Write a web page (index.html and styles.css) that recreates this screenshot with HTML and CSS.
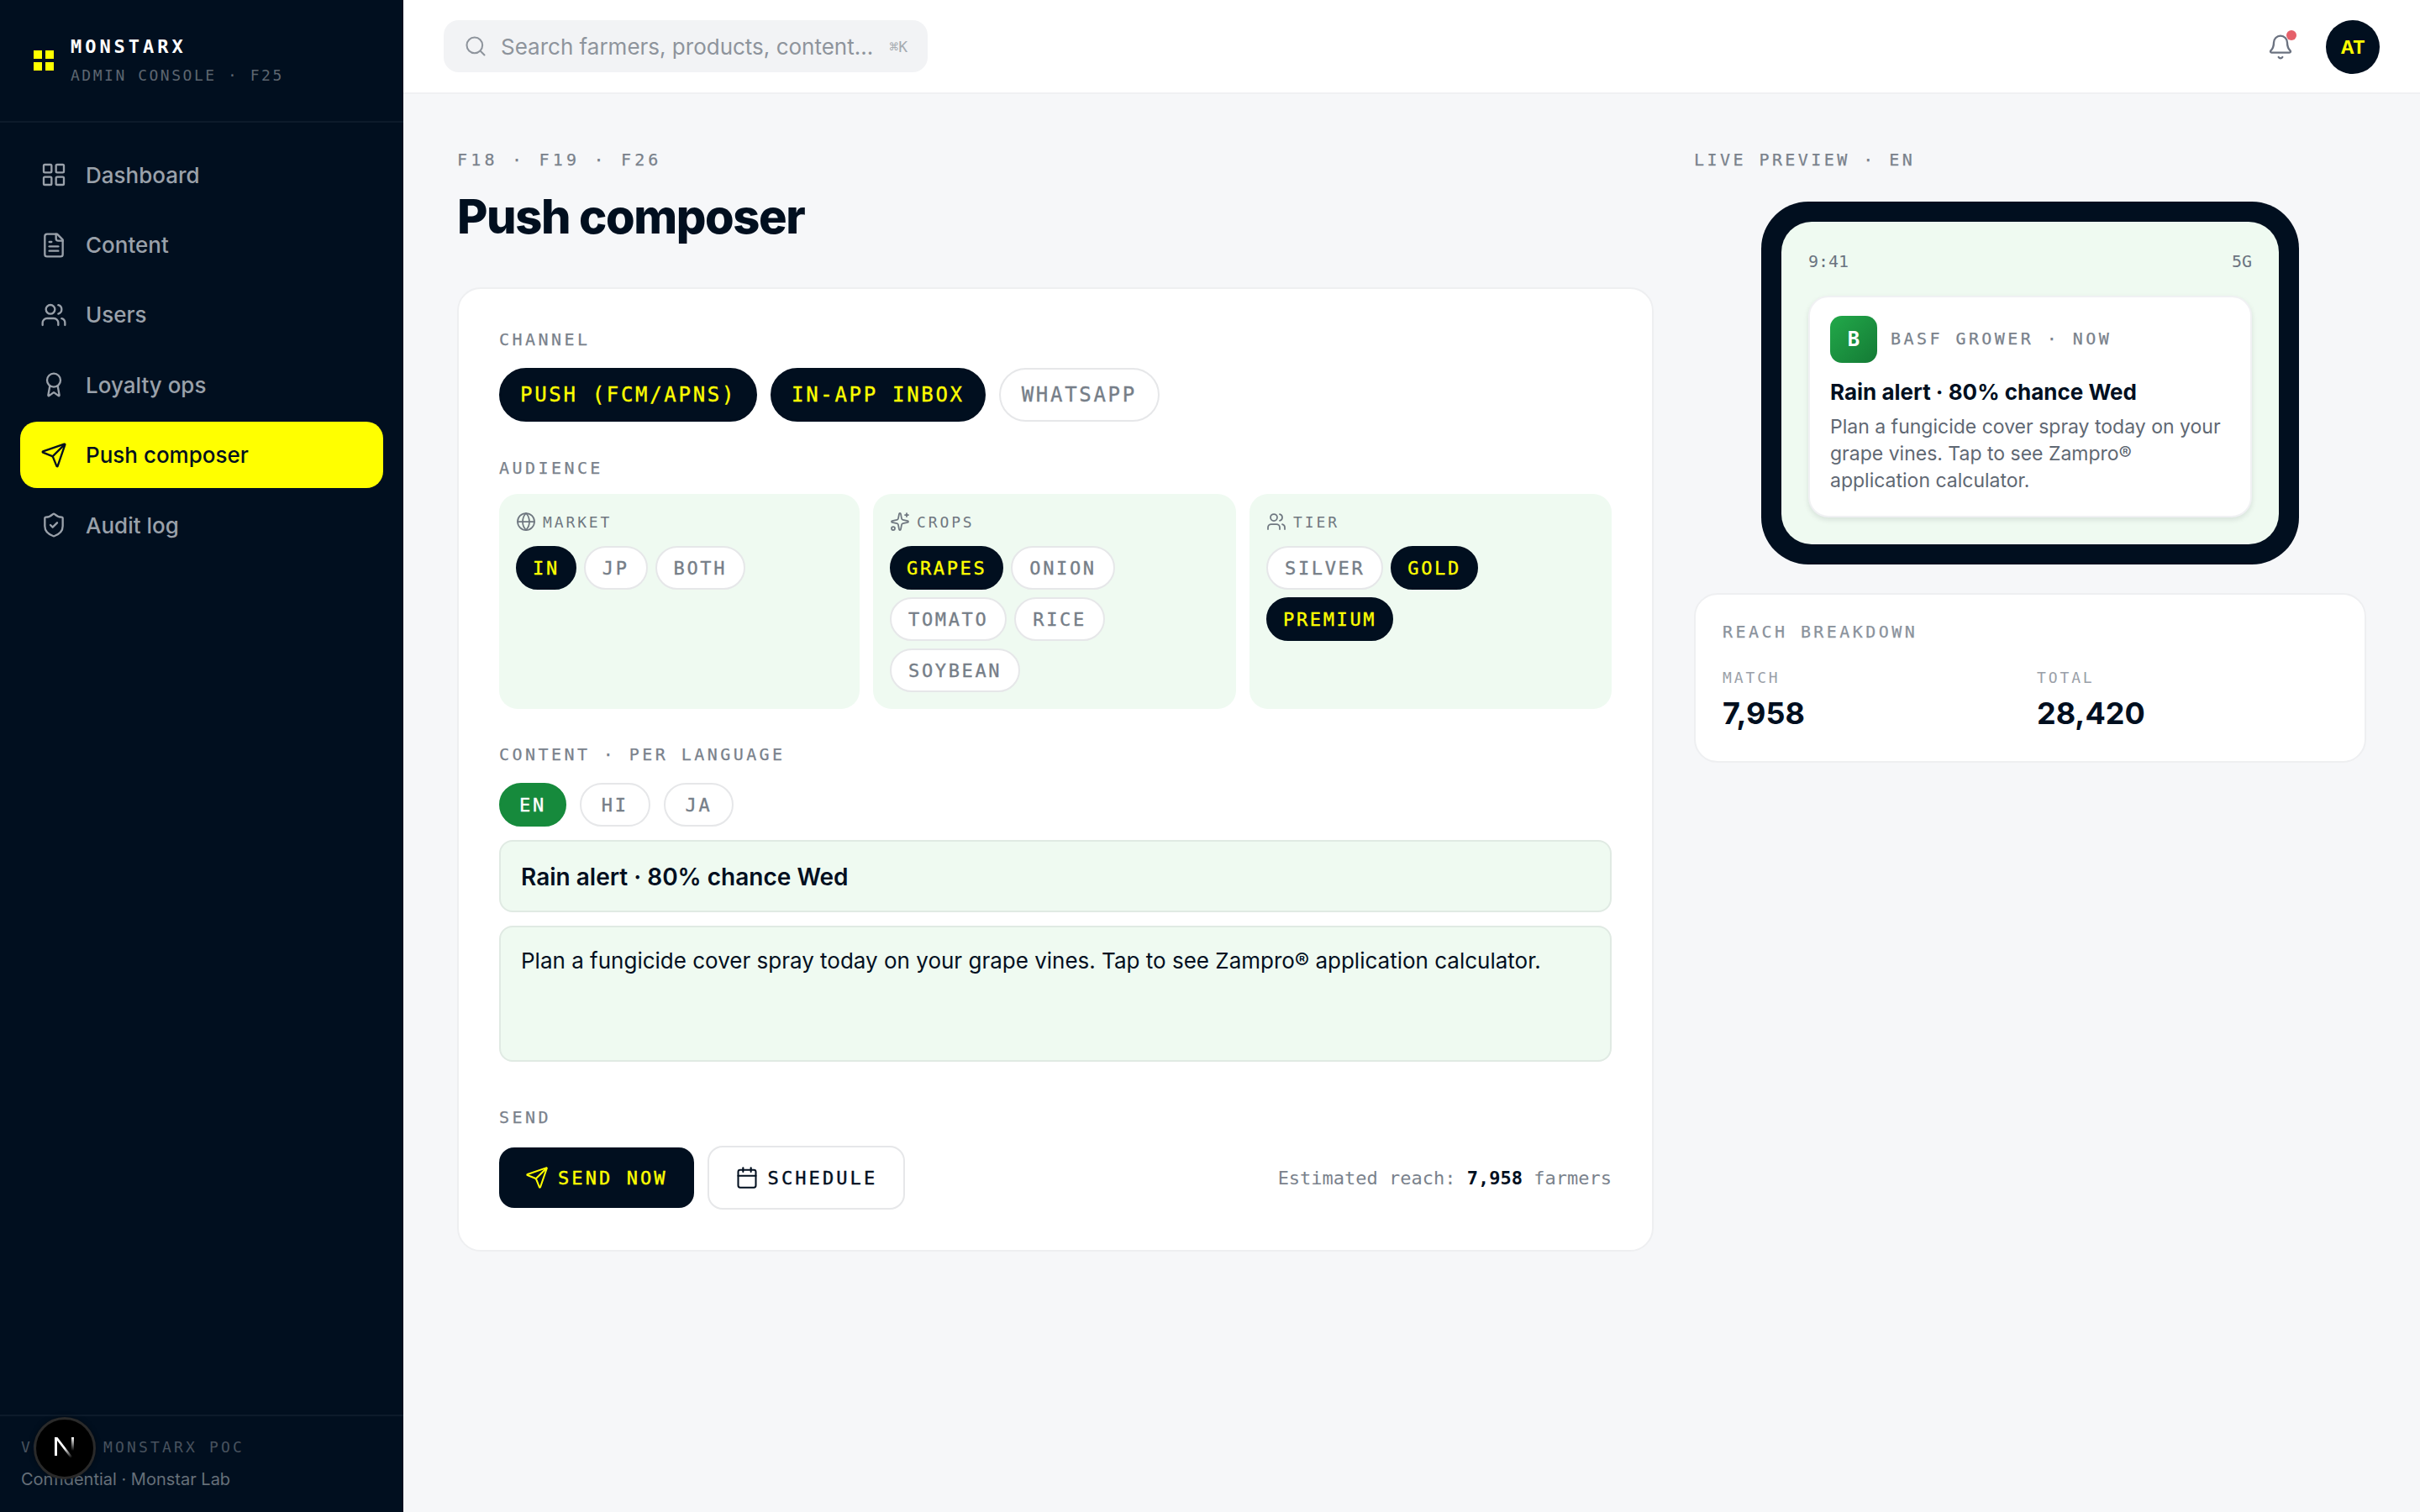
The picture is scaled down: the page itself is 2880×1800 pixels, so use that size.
FILE: index.html
```html
<!DOCTYPE html>
<html lang="en">
<head>
  <meta charset="UTF-8">
  <title>Push composer</title>
  <link rel="stylesheet" href="styles.css">
</head>
<body>
  <div class="app">
    <aside class="sidebar">
      <div class="brand">
        <div class="brand-logo"><i></i><i></i><i></i><i></i></div>
        <div class="brand-text">
          <div class="brand-name">MONSTARX</div>
          <div class="brand-sub">ADMIN CONSOLE · F25</div>
        </div>
      </div>

      <nav class="nav">
        <a class="nav-item">
          <svg class="icon nav-icon" viewBox="0 0 24 24"><rect x="3" y="3" width="7" height="7" rx="1"/><rect x="14" y="3" width="7" height="7" rx="1"/><rect x="14" y="14" width="7" height="7" rx="1"/><rect x="3" y="14" width="7" height="7" rx="1"/></svg>
          Dashboard
        </a>
        <a class="nav-item">
          <svg class="icon nav-icon" viewBox="0 0 24 24"><path d="M15 2H6a2 2 0 0 0-2 2v16a2 2 0 0 0 2 2h12a2 2 0 0 0 2-2V7Z"/><path d="M14 2v4a2 2 0 0 0 2 2h4"/><path d="M10 9H8"/><path d="M16 13H8"/><path d="M16 17H8"/></svg>
          Content
        </a>
        <a class="nav-item">
          <svg class="icon nav-icon" viewBox="0 0 24 24"><path d="M16 21v-2a4 4 0 0 0-4-4H6a4 4 0 0 0-4 4v2"/><circle cx="9" cy="7" r="4"/><path d="M22 21v-2a4 4 0 0 0-3-3.87"/><path d="M16 3.13a4 4 0 0 1 0 7.75"/></svg>
          Users
        </a>
        <a class="nav-item">
          <svg class="icon nav-icon" viewBox="0 0 24 24"><path d="m15.477 12.89 1.515 8.526a.5.5 0 0 1-.81.47l-3.58-2.687a1 1 0 0 0-1.197 0l-3.586 2.686a.5.5 0 0 1-.81-.469l1.514-8.526"/><circle cx="12" cy="8" r="6"/></svg>
          Loyalty ops
        </a>
        <a class="nav-item active">
          <svg class="icon nav-icon" viewBox="0 0 24 24"><path d="M14.536 21.686a.5.5 0 0 0 .937-.024l6.5-19a.496.496 0 0 0-.635-.635l-19 6.5a.5.5 0 0 0-.024.937l7.93 3.18a2 2 0 0 1 1.112 1.11z"/><path d="m21.854 2.147-10.94 10.939"/></svg>
          Push composer
        </a>
        <a class="nav-item">
          <svg class="icon nav-icon" viewBox="0 0 24 24"><path d="M20 13c0 5-3.5 7.5-7.66 8.95a1 1 0 0 1-.67-.01C7.5 20.5 4 18 4 13V6a1 1 0 0 1 1-1c2 0 4.5-1.2 6.24-2.72a1.17 1.17 0 0 1 1.52 0C14.51 3.81 17 5 19 5a1 1 0 0 1 1 1z"/><path d="m9 12 2 2 4-4"/></svg>
          Audit log
        </a>
      </nav>

      <div class="side-foot">
        <div class="side-version">V0.1 · MONSTARX POC</div>
        <div class="side-conf">Confidential · Monstar Lab</div>
      </div>
    </aside>

    <div class="page">
      <header class="topbar">
        <div class="search">
          <svg class="icon search-icon" viewBox="0 0 24 24"><circle cx="11" cy="11" r="8"/><path d="m21 21-4.3-4.3"/></svg>
          <span class="search-text">Search farmers, products, content...</span>
          <span class="search-key">⌘K</span>
        </div>
        <div class="top-right">
          <div class="bell">
            <svg class="icon" viewBox="0 0 24 24"><path d="M10.268 21a2 2 0 0 0 3.464 0"/><path d="M3.262 15.326A1 1 0 0 0 4 17h16a1 1 0 0 0 .74-1.673C19.41 13.956 18 12.499 18 8A6 6 0 0 0 6 8c0 4.499-1.411 5.956-2.738 7.326"/></svg>
            <span class="bell-dot"></span>
          </div>
          <div class="avatar">AT</div>
        </div>
      </header>

      <main class="content">
        <section>
          <div class="label eyebrow crumbs">F18 · F19 · F26</div>
          <h1>Push composer</h1>

          <div class="card composer">
            <div class="label">CHANNEL</div>
            <div class="channel-row">
              <span class="chip chip-lg on">PUSH (FCM/APNS)</span>
              <span class="chip chip-lg on">IN-APP INBOX</span>
              <span class="chip chip-lg">WHATSAPP</span>
            </div>

            <div class="label audience-label">AUDIENCE</div>
            <div class="zones">
              <div class="zone">
                <div class="zone-label">
                  <svg class="icon" viewBox="0 0 24 24"><circle cx="12" cy="12" r="10"/><path d="M12 2a14.5 14.5 0 0 0 0 20 14.5 14.5 0 0 0 0-20"/><path d="M2 12h20"/></svg>
                  MARKET
                </div>
                <div class="chips">
                  <span class="chip on">IN</span>
                  <span class="chip">JP</span>
                  <span class="chip">BOTH</span>
                </div>
              </div>
              <div class="zone">
                <div class="zone-label">
                  <svg class="icon" viewBox="0 0 24 24"><path d="M11.017 2.814a1 1 0 0 1 1.966 0l1.051 5.558a2 2 0 0 0 1.594 1.594l5.558 1.051a1 1 0 0 1 0 1.966l-5.558 1.051a2 2 0 0 0-1.594 1.594l-1.051 5.558a1 1 0 0 1-1.966 0l-1.051-5.558a2 2 0 0 0-1.594-1.594l-5.558-1.051a1 1 0 0 1 0-1.966l5.558-1.051a2 2 0 0 0 1.594-1.594z"/><path d="M20 2v4"/><path d="M22 4h-4"/><circle cx="4" cy="20" r="2"/></svg>
                  CROPS
                </div>
                <div class="chips">
                  <span class="chip on">GRAPES</span>
                  <span class="chip">ONION</span>
                  <span class="chip">TOMATO</span>
                  <span class="chip">RICE</span>
                  <span class="chip">SOYBEAN</span>
                </div>
              </div>
              <div class="zone">
                <div class="zone-label">
                  <svg class="icon" viewBox="0 0 24 24"><path d="M16 21v-2a4 4 0 0 0-4-4H6a4 4 0 0 0-4 4v2"/><circle cx="9" cy="7" r="4"/><path d="M22 21v-2a4 4 0 0 0-3-3.87"/><path d="M16 3.13a4 4 0 0 1 0 7.75"/></svg>
                  TIER
                </div>
                <div class="chips">
                  <span class="chip">SILVER</span>
                  <span class="chip on">GOLD</span>
                  <span class="chip on">PREMIUM</span>
                </div>
              </div>
            </div>

            <div class="label content-label">CONTENT · PER LANGUAGE</div>
            <div class="lang-row">
              <span class="chip lang on-green">EN</span>
              <span class="chip lang">HI</span>
              <span class="chip lang">JA</span>
            </div>
            <div class="field field-title">Rain alert · 80% chance Wed</div>
            <div class="field field-body">Plan a fungicide cover spray today on your grape vines. Tap to see Zampro® application calculator.</div>

            <div class="label send-label">SEND</div>
            <div class="send-row">
              <button class="btn btn-dark">
                <svg class="icon btn-icon" viewBox="0 0 24 24"><path d="M14.536 21.686a.5.5 0 0 0 .937-.024l6.5-19a.496.496 0 0 0-.635-.635l-19 6.5a.5.5 0 0 0-.024.937l7.93 3.18a2 2 0 0 1 1.112 1.11z"/><path d="m21.854 2.147-10.94 10.939"/></svg>
                SEND NOW
              </button>
              <button class="btn btn-light">
                <svg class="icon btn-icon" viewBox="0 0 24 24"><path d="M8 2v4"/><path d="M16 2v4"/><rect x="3" y="4" width="18" height="18" rx="2"/><path d="M3 10h18"/></svg>
                SCHEDULE
              </button>
              <div class="estimate">Estimated reach: <b>7,958</b> farmers</div>
            </div>
          </div>
        </section>

        <section>
          <div class="label eyebrow">LIVE PREVIEW · EN</div>
          <div class="phone">
            <div class="screen">
              <div class="status"><span>9:41</span><span>5G</span></div>
              <div class="notif">
                <div class="notif-head">
                  <div class="notif-logo">B</div>
                  <div class="label notif-app">BASF GROWER · NOW</div>
                </div>
                <div class="notif-title">Rain alert · 80% chance Wed</div>
                <div class="notif-body">Plan a fungicide cover spray today on your grape vines. Tap to see Zampro® application calculator.</div>
              </div>
            </div>
          </div>

          <div class="card reach">
            <div class="label reach-title">REACH BREAKDOWN</div>
            <div class="reach-grid">
              <div>
                <div class="reach-key">MATCH</div>
                <div class="reach-val">7,958</div>
              </div>
              <div>
                <div class="reach-key">TOTAL</div>
                <div class="reach-val">28,420</div>
              </div>
            </div>
          </div>
        </section>
      </main>
    </div>
  </div>

  <div class="dev-badge">
    <svg viewBox="0 0 24 27" width="24" height="27">
      <defs>
        <linearGradient id="nDiag" x1="0" y1="0" x2="0.7" y2="1">
          <stop offset="0.55" stop-color="#fff"/>
          <stop offset="1" stop-color="#fff" stop-opacity="0"/>
        </linearGradient>
        <linearGradient id="nStem" x1="0" y1="0" x2="0" y2="1">
          <stop offset="0" stop-color="#fff"/>
          <stop offset="0.8" stop-color="#fff" stop-opacity="0"/>
        </linearGradient>
      </defs>
      <rect x="0" y="0" width="3" height="22" fill="#fff"/>
      <polygon points="0,0 3.4,0 24,27 20.6,27" fill="url(#nDiag)"/>
      <rect x="20" y="0" width="3" height="20" fill="url(#nStem)"/>
    </svg>
  </div>
</body>
</html>
```

FILE: styles.css
```css
* {
  box-sizing: border-box;
}

body {
  margin: 0;
  font-family: 'Inter', 'Noto Sans', sans-serif;
  background: #f6f7f9;
  color: #010f1f;
}

.icon {
  width: 24px;
  height: 24px;
  flex: none;
  fill: none;
  stroke: currentColor;
  stroke-width: 1.75;
  stroke-linecap: round;
  stroke-linejoin: round;
}

.label {
  font-family: 'DejaVu Sans Mono', 'Liberation Mono', monospace;
  font-size: 20px;
  line-height: 24px;
  letter-spacing: 0.172em;
  color: #7a828c;
  -webkit-text-stroke: 0.25px currentColor;
}

.app {
  display: flex;
  height: 100vh;
}

/* sidebar */
.sidebar {
  width: 480px;
  flex: none;
  display: flex;
  flex-direction: column;
  background: #010f1f;
}

.brand {
  height: 146px;
  padding-left: 40px;
  display: flex;
  align-items: center;
  gap: 20px;
  border-bottom: 2px solid #0d1b2b;
}

.brand-logo {
  width: 24px;
  height: 24px;
  display: grid;
  grid-template-columns: 10px 10px;
  gap: 4px;
}

.brand-logo i {
  background: #ffff00;
}

.brand-text {
  padding-top: 4px;
}

.brand-name {
  font-family: 'DejaVu Sans Mono', monospace;
  font-size: 22px;
  font-weight: bold;
  line-height: 32px;
  letter-spacing: 0.18em;
  color: #fff;
}

.brand-sub {
  font-family: 'DejaVu Sans Mono', monospace;
  font-size: 18px;
  line-height: 36px;
  letter-spacing: 0.14em;
  color: #5d6670;
}

.nav {
  display: flex;
  flex-direction: column;
  gap: 4px;
  padding: 22.5px 24px;
}

.nav-item {
  height: 79.4px;
  padding: 0 24px;
  display: flex;
  align-items: center;
  gap: 22px;
  border-radius: 20px;
  font-size: 26px;
  font-weight: 500;
  color: #9aa1aa;
}

.nav-item.active {
  background: #ffff00;
  color: #010f1f;
}

.nav-icon {
  width: 32px;
  height: 32px;
}

.side-foot {
  margin-top: auto;
  height: 116px;
  padding: 24px 25px 0;
  border-top: 2px solid #0d1b2b;
}

.side-version {
  font-family: 'DejaVu Sans Mono', monospace;
  font-size: 18px;
  line-height: 26px;
  letter-spacing: 0.176em;
  color: #48525e;
}

.side-conf {
  margin-top: 11px;
  font-size: 20px;
  line-height: 28px;
  color: #667079;
}

/* topbar */
.page {
  flex: 1;
  min-width: 0;
}

.topbar {
  height: 112px;
  padding: 0 48px;
  display: flex;
  align-items: center;
  justify-content: space-between;
  background: #fff;
  border-bottom: 2px solid #f0f1f3;
}

.search {
  width: 576px;
  height: 62px;
  padding: 0 24px;
  display: flex;
  align-items: center;
  gap: 16px;
  background: #f2f3f5;
  border-radius: 18px;
  color: #8e949c;
}

.search-icon {
  width: 28px;
  height: 28px;
}

.search-text {
  font-size: 26px;
  white-space: nowrap;
}

.search-key {
  margin-left: auto;
  font-family: 'DejaVu Sans Mono', monospace;
  font-size: 18px;
  color: #a6abb1;
}

.top-right {
  display: flex;
  align-items: center;
  gap: 38px;
  padding-top: 2px;
}

.bell {
  position: relative;
  width: 32px;
  height: 32px;
  color: #6b7280;
}

.bell .icon {
  width: 32px;
  height: 32px;
}

.bell-dot {
  position: absolute;
  top: -4px;
  right: -3px;
  width: 12px;
  height: 12px;
  border-radius: 50%;
  background: #e5606a;
}

.avatar {
  width: 64px;
  height: 64px;
  display: flex;
  align-items: center;
  justify-content: center;
  border-radius: 50%;
  background: #010f1f;
  color: #ffff00;
  font-size: 22px;
  font-weight: 700;
}

/* content */
.content {
  display: grid;
  grid-template-columns: 1fr 800px;
  gap: 48px;
  padding: 62px 64px 64px;
}

.eyebrow {
  line-height: 32px;
}

.crumbs {
  letter-spacing: 0.21em;
}

h1 {
  margin: 20px 0 52px;
  font-size: 56px;
  line-height: 64px;
  font-weight: 800;
  letter-spacing: -0.025em;
}

.card {
  background: #fff;
  border: 2px solid #eeeff1;
  border-radius: 28px;
}

.composer {
  padding: 48px;
}

.chip {
  height: 52px;
  padding: 0 20px;
  display: inline-flex;
  align-items: center;
  background: #fff;
  border: 2px solid #e6e7e9;
  border-radius: 26px;
  font-family: 'DejaVu Sans Mono', monospace;
  font-size: 22px;
  letter-spacing: 0.12em;
  color: #767e88;
  -webkit-text-stroke: 0.35px currentColor;
}

.chip.on {
  padding: 0 18px;
  background: #010f1f;
  border-color: #010f1f;
  color: #ffff00;
}

.chip-lg {
  height: 64px;
  padding: 0 25px;
  border-radius: 32px;
  font-size: 24px;
  letter-spacing: 0.112em;
}

.chip-lg.on {
  padding: 0 23px;
}

.channel-row {
  display: flex;
  gap: 16px;
  margin-top: 22px;
}

.audience-label {
  margin-top: 43px;
}

.zones {
  display: grid;
  grid-template-columns: 429px 432px 1fr;
  gap: 16px;
  margin-top: 19px;
}

.zone {
  padding: 20px;
  background: #effaf1;
  border-radius: 22px;
}

.zone-label {
  display: flex;
  align-items: center;
  gap: 8px;
  height: 26px;
  font-family: 'DejaVu Sans Mono', monospace;
  font-size: 18px;
  letter-spacing: 0.16em;
  color: #6f7780;
}

.chips {
  display: flex;
  flex-wrap: wrap;
  gap: 9px;
  margin-top: 16px;
}

.content-label {
  margin-top: 42px;
}

.lang-row {
  display: flex;
  gap: 16px;
  margin-top: 22px;
}

.lang {
  padding: 0 24px;
}

.chip.on-green {
  padding: 0 22px;
  background: #168a3c;
  border-color: #168a3c;
  color: #fff;
}

.field {
  background: #effaf1;
  border: 2px solid #e0eae3;
  border-radius: 16px;
  padding: 0 24px;
}

.field-title {
  height: 86px;
  margin-top: 16px;
  padding-top: 2px;
  display: flex;
  align-items: center;
  font-size: 28px;
  font-weight: 600;
}

.field-body {
  height: 162px;
  margin-top: 16px;
  padding-top: 20px;
  font-size: 26px;
  line-height: 40px;
}

.send-label {
  margin-top: 54px;
}

.send-row {
  display: flex;
  align-items: center;
  gap: 16px;
  margin-top: 22px;
}

.btn {
  display: flex;
  align-items: center;
  gap: 11px;
  border-radius: 18px;
  font-family: 'DejaVu Sans Mono', monospace;
  font-size: 22px;
  letter-spacing: 0.14em;
  -webkit-text-stroke: 0.4px currentColor;
}

.btn-icon {
  width: 28px;
  height: 28px;
  -webkit-text-stroke: 0;
}

.btn-dark {
  height: 72px;
  padding: 0 31px;
  background: #010f1f;
  border: none;
  color: #ffff00;
}

.btn-light {
  height: 76px;
  padding: 0 31px;
  background: #fff;
  border: 2px solid #e6e7e9;
  color: #010f1f;
}

.estimate {
  margin-left: auto;
  font-family: 'DejaVu Sans Mono', monospace;
  font-size: 22px;
  color: #7a828c;
}

.estimate b {
  color: #010f1f;
}

/* preview */
.phone {
  width: 640px;
  height: 432px;
  margin: 34px auto 0;
  padding: 24px;
  background: #010f1f;
  border-radius: 56px;
}

.screen {
  height: 384px;
  padding: 32px;
  background: #effaf1;
  border-radius: 36px;
}

.status {
  display: flex;
  justify-content: space-between;
  height: 30px;
  font-family: 'DejaVu Sans Mono', monospace;
  font-size: 20px;
  line-height: 30px;
  color: #6b7480;
}

.notif {
  height: 264px;
  margin-top: 26px;
  padding: 22px 24px;
  background: #fff;
  border: 2px solid #f0f1f3;
  border-radius: 24px;
  box-shadow: 0 3px 6px rgba(1, 15, 31, 0.1);
}

.notif-head {
  display: flex;
  align-items: center;
  gap: 16px;
}

.notif-logo {
  width: 56px;
  height: 56px;
  display: flex;
  align-items: center;
  justify-content: center;
  border-radius: 14px;
  background: linear-gradient(135deg, #22a94a, #147a35);
  color: #fff;
  font-family: 'DejaVu Sans Mono', monospace;
  font-size: 24px;
  font-weight: bold;
}

.notif-app {
  margin-top: -3px;
}

.notif-title {
  margin-top: 17px;
  font-size: 26px;
  line-height: 36px;
  font-weight: 700;
}

.notif-body {
  margin-top: 7px;
  font-size: 23px;
  line-height: 32px;
  color: #5f6873;
}

.reach {
  height: 202px;
  margin-top: 34px;
  padding: 32px;
}

.reach-title {
  color: #8a929c;
}

.reach-grid {
  display: grid;
  grid-template-columns: 1fr 1fr;
  gap: 16px;
  margin-top: 31px;
}

.reach-key {
  font-family: 'DejaVu Sans Mono', monospace;
  font-size: 18px;
  line-height: 24px;
  letter-spacing: 0.16em;
  color: #9aa0a8;
}

.reach-val {
  margin-top: 6px;
  font-size: 36px;
  line-height: 48px;
  font-weight: 700;
}

/* dev indicator */
.dev-badge {
  position: fixed;
  left: 40px;
  bottom: 39px;
  width: 74px;
  height: 74px;
  display: flex;
  align-items: center;
  justify-content: center;
  background: #000;
  border: 3px solid #2a2a2a;
  border-radius: 50%;
  box-shadow: 0 0 6px rgba(0, 0, 0, 0.4);
}
```
